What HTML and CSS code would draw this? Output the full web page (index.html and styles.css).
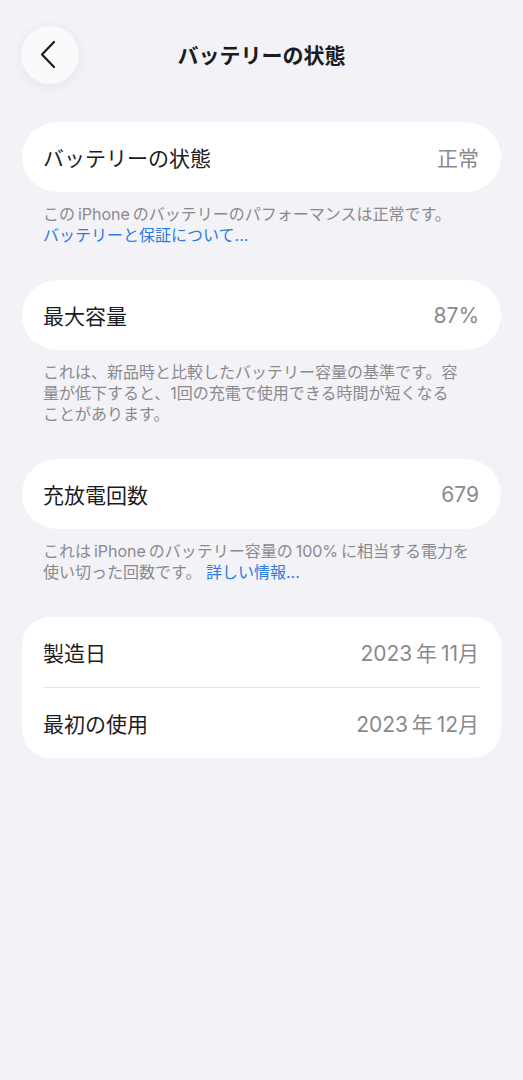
FILE: index.html
```html
<!DOCTYPE html>
<html lang="ja">
<head>
<meta charset="UTF-8">
<meta name="viewport" content="width=device-width, initial-scale=1.0">
<title>バッテリーの状態</title>
<link rel="stylesheet" href="styles.css">
</head>
<body>
<div class="screen">
  <header class="nav">
    <button class="back" aria-label="戻る">
      <svg width="20" height="30" viewBox="0 0 20 30">
        <path d="M15 2 L3 14.5 L15 27" fill="none" stroke="#1c1c1e" stroke-width="2.2" stroke-linecap="round" stroke-linejoin="round"/>
      </svg>
    </button>
    <h1 class="nav-title">バッテリーの状態</h1>
    <span class="nav-spacer"></span>
  </header>

  <section class="group">
    <div class="card">
      <div class="row">
        <span class="label">バッテリーの状態</span>
        <span class="value">正常</span>
      </div>
    </div>
    <p class="note">この&thinsp;iPhone&thinsp;のバッテリーのパフォーマンスは正常です。<br><a class="link" href="#">バッテリーと保証について...</a></p>
  </section>

  <section class="group">
    <div class="card">
      <div class="row">
        <span class="label">最大容量</span>
        <span class="value">87%</span>
      </div>
    </div>
    <p class="note">これは、新品時と比較したバッテリー容量の基準です。容<br>量が低下すると、1回の充電で使用できる時間が短くなる<br>ことがあります。</p>
  </section>

  <section class="group">
    <div class="card">
      <div class="row">
        <span class="label">充放電回数</span>
        <span class="value">679</span>
      </div>
    </div>
    <p class="note">これは&thinsp;iPhone&thinsp;のバッテリー容量の&thinsp;100%&thinsp;に相当する電力を<br>使い切った回数です。 <a class="link" href="#">詳しい情報...</a></p>
  </section>

  <section class="group">
    <div class="card card-list">
      <div class="row">
        <span class="label">製造日</span>
        <span class="value">2023&thinsp;年&thinsp;11月</span>
      </div>
      <div class="row">
        <span class="label">最初の使用</span>
        <span class="value">2023&thinsp;年&thinsp;12月</span>
      </div>
    </div>
  </section>
</div>
</body>
</html>
```

FILE: styles.css
```css
:root {
  --bg: #f2f2f7;
  --card: #ffffff;
  --text: #1c1c1e;
  --muted: #8a8a8e;
  --link: #2c7be0;
  --sep: #e6e6ea;
}

*,
::before,
::after {
  box-sizing: border-box;
}

html,
body {
  margin: 0;
  padding: 0;
  background: var(--bg);
  color: var(--text);
  font-family: Inter, "Noto Sans CJK JP", sans-serif;
}

.screen {
  width: 523px;
  min-height: 1080px;
  padding-top: 26px;
}

/* Nav bar */
.nav {
  display: grid;
  grid-template-columns: 58px 1fr 58px;
  align-items: center;
  padding: 0 21px;
  height: 58px;
  margin-bottom: 38px;
}

.back {
  width: 58px;
  height: 58px;
  border: 0;
  padding: 0;
  border-radius: 50%;
  background: #fafafc;
  box-shadow: 0 2px 14px rgba(0, 0, 0, 0.06);
  display: flex;
  align-items: center;
  justify-content: center;
  padding-right: 2px;
}

.nav-title {
  margin: 0;
  text-align: center;
  font-size: 21px;
  font-weight: 700;
  line-height: 1;
}

/* Groups */
.group {
  margin: 0 22px 34px;
}

.card {
  background: var(--card);
  border-radius: 35px;
  padding: 0 22px 0 21px;
}

.card-list {
  border-radius: 28px;
  padding-right: 20px;
}

.row {
  height: 70px;
  display: flex;
  align-items: center;
  justify-content: space-between;
  font-size: 21px;
}

.card-list .row + .row {
  border-top: 1px solid var(--sep);
  height: 71px;
}

.card-list .value {
  margin-right: 2px;
}

.label {
  color: var(--text);
}

.value {
  color: var(--muted);
}

.note {
  margin: 12px 0 0;
  padding: 0 21px;
  font-size: 16px;
  line-height: 21px;
  color: var(--muted);
}

.link {
  color: var(--link);
  text-decoration: none;
}
```
